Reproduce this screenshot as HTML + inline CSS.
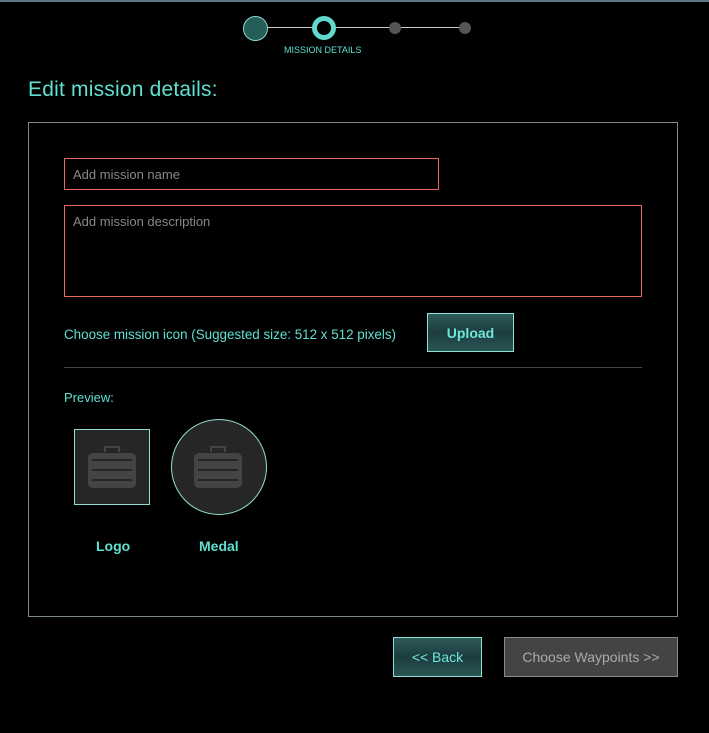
<!DOCTYPE html>
<html><head><style>
*{box-sizing:border-box;margin:0;padding:0}
body{width:709px;height:733px;background:#000;position:relative;overflow:hidden;font-family:"Liberation Sans",sans-serif}
.a{position:absolute}
.teal{color:#5fe0d2}
.btn{position:absolute;border:1px solid #8fe0d8;background:linear-gradient(#2e5a5a,#1c3c3e 50%,#2b5555);color:#6fe8dc;font-weight:bold;font-size:14px;display:flex;align-items:center;justify-content:center}
</style></head><body>
<div class="a" style="left:0;top:0;width:709px;height:2px;background:#5a7a88"></div>
<div class="a" style="left:256px;top:27px;width:208px;height:1px;background:#ccc"></div>
<div class="a" style="left:243px;top:16px;width:25px;height:25px;border-radius:50%;background:#245e58;border:1px solid #8ad8cc"></div>
<div class="a" style="left:312px;top:16px;width:24px;height:24px;border-radius:50%;background:#000;border:5px solid #5fd9cb"></div>
<div class="a" style="left:389px;top:22px;width:12px;height:12px;border-radius:50%;background:#555"></div>
<div class="a" style="left:459px;top:22px;width:12px;height:12px;border-radius:50%;background:#555"></div>
<div class="a teal" style="left:284px;top:45px;font-size:9px">MISSION DETAILS</div>
<div class="a teal" style="left:28px;top:78px;font-size:21px;letter-spacing:0.2px">Edit mission details:</div>
<div class="a" style="left:28px;top:122px;width:650px;height:495px;border:1px solid #7a8a90"></div>
<div class="a" style="left:64px;top:158px;width:375px;height:32px;border:1px solid #e06a5a;color:#888;font-size:13px;padding:8px 8px">Add mission name</div>
<div class="a" style="left:64px;top:205px;width:578px;height:92px;border:1px solid #e06a5a;color:#888;font-size:13px;padding:8px 8px">Add mission description</div>
<div class="a teal" style="left:64px;top:327px;font-size:13.4px">Choose mission icon (Suggested size: 512 x 512 pixels)</div>
<div class="btn" style="left:427px;top:313px;width:87px;height:39px">Upload</div>
<div class="a" style="left:64px;top:367px;width:578px;height:1px;background:#444"></div>
<div class="a teal" style="left:64px;top:390px;font-size:13px">Preview:</div>
<div class="a" style="left:74px;top:429px;width:76px;height:76px;border:1px solid #8ee0d6;background:#262626"></div>
<div class="a" style="left:171px;top:419px;width:96px;height:96px;border-radius:50%;border:1px solid #8ee0d6;background:#262626"></div>
<svg class="a" style="left:0;top:0" width="709" height="733">
<g fill="#444"><rect x="88" y="453" width="48" height="35" rx="5"/><rect x="194" y="453" width="48" height="35" rx="5"/></g>
<g fill="none" stroke="#444" stroke-width="2"><path d="M105 452v-5h14v5M211 452v-5h14v5"/></g>
<g stroke="#262626" stroke-width="2"><path d="M92 460h40M92 470h40M92 480h40M198 460h40M198 470h40M198 480h40"/></g>
</svg>
<div class="a teal" style="left:96px;top:538px;font-size:14px;font-weight:bold">Logo</div>
<div class="a teal" style="left:199px;top:538px;font-size:14px;font-weight:bold">Medal</div>
<div class="btn" style="left:393px;top:637px;width:89px;height:40px;font-weight:normal">&lt;&lt; Back</div>
<div class="a" style="left:504px;top:637px;width:174px;height:40px;border:1px solid #888;background:#444;color:#aaa;font-size:14px;display:flex;align-items:center;justify-content:center">Choose Waypoints &gt;&gt;</div>
</body></html>
